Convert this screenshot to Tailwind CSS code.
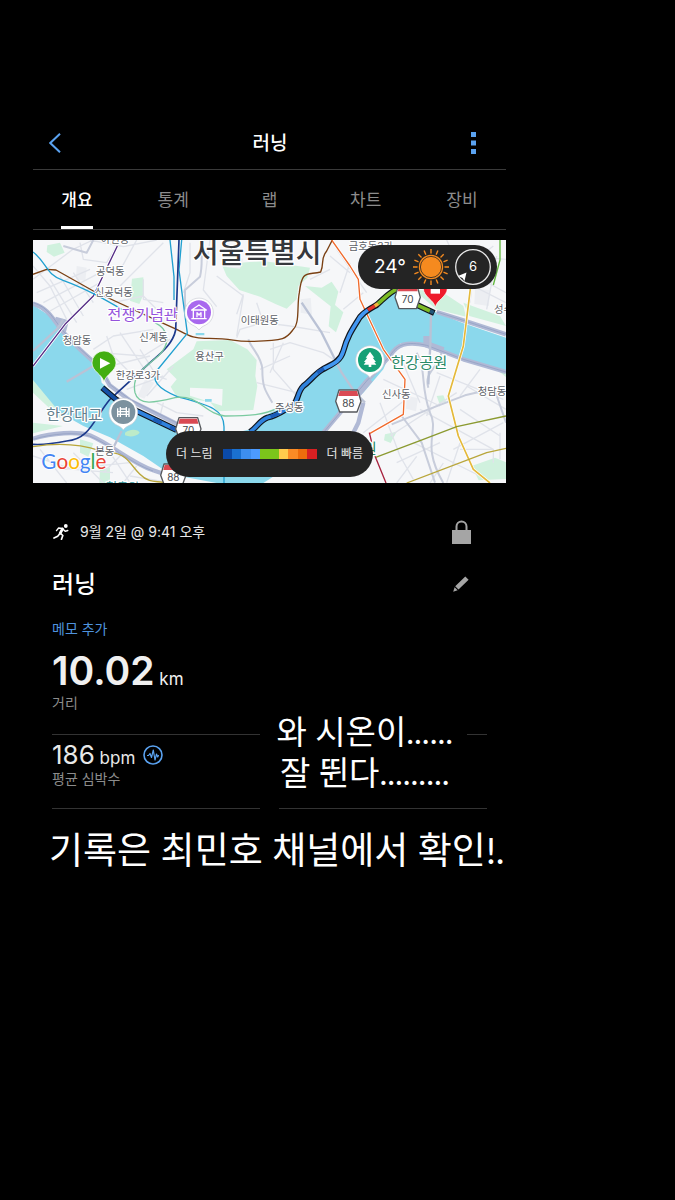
<!DOCTYPE html>
<html lang="ko">
<head>
    <meta charset="UTF-8">
    <meta name="viewport" content="width=device-width, initial-scale=1.0">
    <title>러닝</title>
    <script src="https://cdn.jsdelivr.net/npm/@tailwindcss/browser@4"></script>
    <style>
        body { font-family: Inter, 'Noto Sans CJK KR', sans-serif; }
        .caption { font-family: Lato, 'Noto Sans CJK KR', sans-serif; }
        .halo text { paint-order: stroke; stroke: #fff; stroke-width: 7px; stroke-linejoin: round; }
    </style>
</head>
<body class="bg-black text-white min-h-screen">
    <main class="ml-[33px] mr-[169px] pt-[116px]">
        <header class="flex items-center justify-between h-[54px] px-4 border-b border-[#3a3a3a]">
            <button type="button" aria-label="뒤로" class="text-[#5aa2f0]">
                <svg class="w-3 h-5" viewBox="0 0 12 20" fill="none" stroke="currentColor" stroke-width="2"><path d="M11 .8 1.3 10 11 19.2"/></svg>
            </button>
            <h1 class="text-[19px] font-medium pl-[22px] pt-1">러닝</h1>
            <button type="button" aria-label="더 보기" class="text-[#5aa2f0] px-3.5">
                <svg class="w-[5px] h-[22px]" viewBox="0 0 5 22" fill="currentColor"><path d="M0 0h5v5H0zM0 8.5h5v5H0zM0 17h5v5H0z"/></svg>
            </button>
        </header>

        <nav class="flex justify-between h-[60px] px-7 border-b border-[#3a3a3a] text-[17px] text-[#8c8c8c]">
            <button type="button" class="w-8 pt-1.5 text-white font-medium border-b-3 border-white whitespace-nowrap">개요</button>
            <button type="button" class="w-8 pt-1.5 border-b-3 border-transparent whitespace-nowrap">통계</button>
            <button type="button" class="w-8 pt-1.5 border-b-3 border-transparent whitespace-nowrap">랩</button>
            <button type="button" class="w-8 pt-1.5 border-b-3 border-transparent whitespace-nowrap">차트</button>
            <button type="button" class="w-8 pt-1.5 border-b-3 border-transparent whitespace-nowrap">장비</button>
        </nav>

        <!-- Route map -->
        <section class="relative mt-[10px]">
            <svg class="block w-full" viewBox="9 12 1419 729" fill="none" stroke-linejoin="round">
                <path fill="#f6f7f9" d="M9 12h1419v729H9z"/>
                <!-- parks -->
                <g fill="#d0f1de">
                    <path d="M575 85 700 75 840 95 832 125 805 150 800 190 770 218 738 205 690 182 628 162 590 120z"/>
                    <path d="M500 316 600 312 652 340 680 372 676 420 682 450 670 522 562 526 540 497 440 482 422 452 440 430 410 400 450 370 490 340z"/>
                    <path d="m825 150 50 5 30-18 20 30-10 40 25 22-22 60-22-18 6-60-40-32z"/>
                    <path d="m306 128 34-4 2 48-14 32-28-10zM52 28l38-8 14 30-32 12-22-14z"/>
                    <path d="m9 432 40 25 62 80-22 8L9 470zM250 560l70 18 8 14-40 8-48-20z"/>
                    <path d="m1150 160 90 10 60 40 8 32-90-22zM1300 200l110 40 18 30-110-30z"/>
                    <path d="m860 560 50-20 30-38-50 90-50 20zM1065 595l35-8-18 34-20-8zM1325 690l70-25 33 14v50l-82 4zM1220 480l20-2 8 20-20 4zM1405 405l23-6v24z"/>
                    <path d="m150 610 40 12-15 40-25-12zM9 560l90 10-90 22zM1215 40l70-12 12 40-40 30-40-20z"/>
                    <path d="M210 695h30v46h-32z"/>
                </g>
                <g fill="#eceef2">
                    <path d="m140 90 30 5-4 40-28-6zM580 60l60 8-10 30-40-4zM812 190l30-4 4 50-34-6zM1130 480l34 6-6 40-30-8zM1335 160l44 2-2 48-44-6zM345 430l28 10-30 48-20-8z"/>
                </g>
                <path fill="#f6f7f9" d="m480 455 98 4-2 50-96-30zM520 340l30 2-4 40-26-6z"/>
                <path fill="#8bd8ec" d="M525 489h20v8h-20zM497 291h26v7h-26z"/>
                <!-- side streets -->
                <g stroke="#e0e3ea" stroke-width="4">
                    <path d="M9 90 60 150 110 250M20 170l160-70M40 200l170-90M60 225l150-85M60 130l80 130M90 120l70 120M130 110l60 90M9 130l120-90 60-28M150 20l10 50 70 10 30-50M340 130v60l60 10M250 200l90-20 60 60M270 150l130-130M320 12l-60 110M180 12l100 20 100-20"/>
                    <path d="M210 350l130 10 80-50M190 340l60-40 120-20M230 300l20 60 60 60M270 290l80 120 60 20M240 390l120-30M330 340l50 80M290 460l110-40M350 480l80-90M380 500l60 30 80 10M400 500l-10 40"/>
                    <path d="M480 20v90l-20 60M540 12l-20 150 40 50M560 120l80 60-20 120M640 175l-20 60M680 200l20 60 80 10M700 260l-70 20-10 25M720 340l60-20 100 30 30 20M760 320l-40 90M780 270l120 20M840 130l60-30M900 60l60 50M690 400l90-40M680 440l120 30M730 320v80l70 80M920 40l90 130M940 220l60-50M960 80l-30 90"/>
                    <path d="M1040 60l180 90M1300 100l128 70M1240 150l150-120M1310 140l118 60M1330 110l-10 90M1400 60l-30 160M1250 12l50 110M1310 60l118 10"/>
                    <path d="M1060 430l170 80M1080 600l200-130M1110 360l60 140M1050 500l60 160 40 70M1230 420l-40 120M1000 590l140-110M1150 620l200 100M1170 520l220 120M1290 520l120 80M1270 640l150-80M1100 680l130-60M1220 410l200 80M1350 400l-60 80M1100 741l60-80M1290 620l-40 120M1410 590v80M1200 741l40-60M1310 450l118 70M1290 640h100v40"/>
                    <path d="M9 660l120 40 120 10M130 650l90 91M100 700l200-20M240 650l60 90M280 650l-60 60M320 690l-40 50M30 640l80 101M300 720l120 20"/>
                </g>
                <g stroke="#c8cddb" stroke-width="6">
                    <path d="M520 12c-10 50 0 70-10 110l-45 40v70M655 310c10 30 40 50 42 90 0 50 6 60 30 100M1160 350c30 50 10 100 40 180 30 60-30 90 40 211M1195 455c-15-50 35-60 40-110M1085 565l110-45 110-42 120-28M1115 540l60 80 40 120M1390 450l38 110M190 12 170 50 100 30"/>
                </g>

                <!-- Han river -->
                <path fill="#8bd8ec" d="M9 207 60 240 100 290 150 345 205 385 215 440 280 500 350 540 440 590 520 602 600 595 660 580 720 530 790 505 815 460 865 410 920 375 950 310 1000 235 1030 215 1095 165 1220 230 1300 262 1428 305V412L1300 375 1195 328 1112 322 1080 355 1060 400 1000 470 910 545 860 610 780 690 700 741H560L420 715 340 660 240 604 160 570 90 530 9 432z"/>
                <path fill="#bdebc9" d="M285 590c20-14 40-8 44 0-10 12-30 14-44 8z"/>
                <!-- riverside expressways -->
                <g stroke="#b0b9d5" stroke-width="13">
                    <path d="M9 203c50 15 60 50 95 90s60 62 105 100l30 55 60 45 100 50 90 45 100 18 70-8M9 608c60-18 130-22 170-10 70 30 120 80 190 105l60 20M880 590l80-95 50-60 70-75c20-35 50-45 110-32l110 42 128 38M1220 228l80 25 128 42M1000 500l-15 60-15 30"/>
                    <path stroke-width="20" d="m75 252 30 8-8 30M1020 430l-50 60M1190 300v25l50 18"/>
                </g>
                <g stroke="#8e9bbf" stroke-width="2">
                    <path d="M9 200c50 15 60 50 95 90s60 62 105 100l30 55 60 45 100 50 90 45M9 610c60-18 130-22 170-10 70 30 120 80 190 105M880 590l80-95 50-60 70-75c20-35 50-45 110-32l110 42 128 38M1220 228l80 25 128 42"/>
                </g>
                <!-- bridges and arterial roads -->
                <g stroke="#bac2d5" stroke-width="7">
                    <path d="M9 345 80 280 100 250M110 437l85-50M275 585l-25 50M815 200l60 90 60 120 40 60 30 30M1203 235l-2 90-6 120"/>
                </g>

                <!-- subway lines -->
                <g stroke="#fff" stroke-width="9">
                    <path d="M905 12 960 90 985 130 990 190 1060 340 1125 430 1120 535 1020 592M1322 150 1300 330 1255 480 1285 600 1330 700 1380 741M262 30 190 180 105 265 9 390"/>
                </g>
                <g stroke-width="4">
                    <path stroke="#7a4013" d="M9 115 50 100 78 102 190 165 400 262 440 280C480 300 490 308 530 307 620 306 600 318 670 316 770 314 770 306 790 280 810 260 800 210 808 170 816 100 830 118 872 108 884 80 870 70 890 45L907 12"/>
                    <path stroke="#552d86" d="M262 30 190 180 105 265 9 390"/>
                    <path stroke="#20a0d0" d="M9 48c40 30 40 70 90 85 70 25 130 60 190 95M420 12l12 110v70M455 12l-8 90 25 190-90 110c-20 30 0 55 60 80 90 25 140 35 140 90v170"/>
                    <path stroke="#1c3a8c" stroke-width="5" d="M447 12l-10 270c-10 50-60 80-90 110L240 490c-50 60-60 120-130 125-50 10-70 12-101 10"/>
                    <path stroke="#7bcaa0" d="M375 260c40 20 50 60 10 100-50 40-80 60-70 110 10 40 60 30 120 15 70-12 90 50 150 55 70 0 120-2 160-25"/>
                    <path stroke="#f06a2c" d="M905 12 960 90 985 130 990 190 1060 340 1125 430 1120 535 1020 592"/>
                    <path stroke="#e4b93a" stroke-width="5" d="M1322 150 1300 330 1255 480 1285 600 1330 700 1380 741"/>
                    <path stroke="#8b9a30" d="M1035 665 1180 610 1280 572 1428 540"/>
                    <path stroke="#b9a63a" d="M1130 741 1370 650 1428 637M9 632c60-10 130-12 200 12 90 8 80 30 120 70 30 30 50 20 70 25"/>
                    <path stroke="#a8233f" d="M1018 590 1035 660 1068 741"/>
                    <path stroke="#62b83e" d="M1410 12v60l-20 75"/>
                </g>

                <!-- recorded route -->
                <path stroke="#10151d" stroke-width="18" d="M217 455 260 492 320 525 440 582M660 588C680 575 688 554 712 545 745 538 765 520 790 507 806 490 802 468 820 450 840 436 850 418 875 402 900 386 930 380 940 345 952 300 970 275 990 243 1005 225 1020 218 1040 207 1060 190 1080 165 1110 155M1150 202 1213 231"/>
                <g stroke-width="11">
                    <path stroke="#1551a5" d="m218 456 42 36 60 33"/>
                    <path stroke="#2f82dd" d="m320 525 120 57M660 588C680 575 688 554 712 545 745 538 765 520 790 507 806 490 802 468 820 450 840 436 850 418 875 402"/>
                    <path stroke="#1b5db9" d="m370 550 25 11M420 573l20 9M722 542l28-11M862 410l22-14"/>
                    <path stroke="#4297f2" d="M882 398C905 385 930 380 940 345 952 300 970 275 990 243 998 233 1004 228 1014 222"/>
                    <path stroke="#e5322a" d="m1014 222 20-12"/>
                    <path stroke="#f3b43c" d="m1034 210 12-8"/>
                    <path stroke="#7dbb25" d="M1044 203C1062 188 1080 165 1110 155M1150 202l50 23"/>
                    <path stroke="#23567a" d="m1200 225 11 5"/>
                </g>

                <!-- place names -->
                <g class="halo" fill="#5c6066" font-size="31">
                    <text x="212" y="22">아현동</text>
                    <text x="198" y="118">공덕동</text>
                    <text x="194" y="179">신공덕동</text>
                    <text x="98" y="324">청암동</text>
                    <text x="328" y="315">신계동</text>
                    <text x="632" y="264">이태원동</text>
                    <text x="496" y="371">용산구</text>
                    <text x="257" y="428">한강로3가</text>
                    <text x="735" y="524">주성동</text>
                    <text x="1056" y="486">신사동</text>
                    <text x="1343" y="478">청담동</text>
                    <text x="1392" y="231">성수</text>
                    <text x="956" y="43">금호동3가</text>
                    <text x="196" y="657">본동</text>
                </g>
                <g class="halo" font-size="46">
                    <text x="232" y="251" fill="#9553dc">전쟁기념관</text>
                    <text x="1083" y="396" fill="#2a8a68">한강공원</text>
                    <text x="48" y="552" fill="#64808d">한강대교</text>
                    <text x="998" y="654" fill="#2a8a68">원</text>
                    <text x="228" y="768" font-size="36" fill="#2f8f94">현충원</text>
                </g>
                <g class="halo" font-weight="500"><text x="488" y="80" font-size="84" fill="#36383d">서울특별시</text></g>

                <!-- road shields -->
                <g font-size="30" text-anchor="middle">
                    <g transform="translate(1133 184)">
                        <path fill="#fff" stroke="#55585c" stroke-width="4" d="M-28-36h56l10 36-12 34h-52L-38 0z"/><path fill="#da4a53" d="M-26-33h52l4 15h-60z"/><text y="16" fill="#44474b">70</text>
                    </g>
                    <g transform="translate(955 495)">
                        <path fill="#fff" stroke="#55585c" stroke-width="4" d="M-28-33h56l10 34-12 32h-52L-38 1z"/><path fill="#da4a53" d="M-26-30h52l4 15h-60z"/><text y="17" fill="#44474b">88</text>
                    </g>
                    <g transform="translate(475 578)">
                        <path fill="#fff" stroke="#55585c" stroke-width="4" d="M-28-33h56l10 34-12 32h-52L-38 1z"/><path fill="#da4a53" d="M-26-30h52l4 15h-60z"/><text y="17" fill="#44474b">70</text>
                    </g>
                    <g transform="translate(430 717)">
                        <path fill="#fff" stroke="#55585c" stroke-width="4" d="M-28-33h56l10 34-12 32h-52L-38 1z"/><path fill="#da4a53" d="M-26-30h52l4 15h-60z"/><text y="17" fill="#44474b">88</text>
                    </g>
                </g>

                <!-- museum -->
                <path fill="#fff" stroke="#c9ccd3" stroke-width="2" d="M507 282c-8-12-18-12-28-20a43 43 0 1 1 56 0c-10 8-20 8-28 20z"/>
                <circle cx="507" cy="229" r="36" fill="#a868ee"/>
                <path stroke="#fff" stroke-width="4" d="M485 222h44l-22-15zM490 224v22M524 224v22M484 248h46M501 244v-14l6 7 6-7v14"/>
                <!-- riverside park -->
                <path fill="#fff" stroke="#c9ccd3" stroke-width="2" d="M1020 425c-8-12-18-12-28-20a43 43 0 1 1 56 0c-10 8-20 8-28 20z"/>
                <circle cx="1020" cy="372" r="36" fill="#16a077"/>
                <path fill="#fff" d="m1020 347 13 18h-5l10 13h-5l6 8h-15v7h-8v-7h-15l6-8h-5l10-13h-5z"/>
                <!-- bridge -->
                <path fill="#fff" stroke="#c9ccd3" stroke-width="2" d="M280 582c-8-12-18-12-28-20a43 43 0 1 1 56 0c-10 8-20 8-28 20z"/>
                <circle cx="280" cy="528" r="36" fill="#7c929f"/>
                <path stroke="#fff" stroke-width="4" d="M261 527h38M261 535h38M271 513v30M289 513v30M271 519h18M263 517v26M297 517v26"/>
                <!-- start / finish -->
                <path fill="#43ae12" stroke="#fff" stroke-width="2" d="M222 438c-4-22-36-32-36-57a36 36 0 0 1 72 0c0 25-32 35-36 57z"/>
                <path fill="#fff" d="m210 366 31 16-31 16z"/>
                <path fill="#ee1b2b" stroke="#fff" stroke-width="2" d="M1216 214c-4-22-36-32-36-57a36 36 0 0 1 72 0c0 25-32 35-36 57z"/>
                <path fill="#fff" d="M1202 145h28v28h-28z"/>

                <text x="34" y="698" font-size="62" font-family="Lato, sans-serif" stroke="#fff" stroke-width="5" paint-order="stroke"><tspan fill="#4285f4">G</tspan><tspan fill="#ea4335">o</tspan><tspan fill="#fbbc05">o</tspan><tspan fill="#4285f4">g</tspan><tspan fill="#34a853">l</tspan><tspan fill="#ea4335">e</tspan></text>
            </svg>

            <div class="absolute top-[5px] right-[9px] flex items-center justify-between w-[139px] h-[44px] pl-4 pr-1.5 rounded-full bg-[#242424]">
                <span class="text-[19px]">24°</span>
                <div class="flex items-center gap-1.5">
                    <svg class="size-9" viewBox="-18 -18 36 36">
                        <path stroke="#f58a1f" stroke-width="1.4" d="M0-18v36M-18 0h36M-12.7-12.7l25.4 25.4M-12.7 12.7l25.4-25.4M-6.9-16.6l13.8 33.2M6.9-16.6l-13.8 33.2M-16.6-6.9l33.2 13.8M-16.6 6.9l33.2-13.8"/>
                        <circle r="13.5" fill="#242424"/>
                        <circle r="12.2" fill="#f58a1f"/>
                        <circle r="10.6" fill="none" stroke="#242424" stroke-width=".8"/>
                    </svg>
                    <div class="relative flex items-center justify-center size-9 text-[13px]">
                        <svg class="absolute inset-0 size-9" viewBox="0 0 36 36" fill="none"><circle cx="18" cy="18" r="17.3" stroke="#e8e8e8" stroke-width="1.3"/><path fill="#fff" d="m3 27 8.500-3.500-2 8.500-2-3z"/></svg>
                        <span>6</span>
                    </div>
                </div>
            </div>

            <div class="absolute inset-x-0 bottom-1.5 flex justify-center">
                <div class="flex items-center gap-[10px] w-[207px] h-[46px] px-[10px] rounded-full bg-[#242424] text-xs text-[#e6e6e6] whitespace-nowrap">
                    <span>더 느림</span>
                    <div class="flex flex-1 h-[10px]">
                        <i class="flex-1 bg-[#0b4aa8]"></i><i class="flex-1 bg-[#1a70d0]"></i><i class="flex-1 bg-[#3d8eef]"></i><i class="flex-1 bg-[#4c9bff]"></i><i class="flex-1 bg-[#7cc51b]"></i><i class="flex-1 bg-[#7cc51b]"></i><i class="flex-1 bg-[#ffcb4d]"></i><i class="flex-1 bg-[#fa8b25]"></i><i class="flex-1 bg-[#ee6c0c]"></i><i class="flex-1 bg-[#d82022]"></i>
                    </div>
                    <span>더 빠름</span>
                </div>
            </div>
        </section>

        <section class="px-[19px] pt-9">
            <div class="flex items-center justify-between h-[26px] pr-4">
                <p class="flex items-center gap-2.5 text-sm text-[#e8e8e8]">
                    <svg class="w-[18px] h-4" viewBox="0 0 18 16" fill="none" stroke="#fff" stroke-linecap="round" stroke-linejoin="round"><circle cx="13.800" cy="2" r="1.900" fill="#fff" stroke="none"/><path stroke-width="2.800" d="M10.500 5 8.200 9.200"/><path stroke-width="1.400" d="M10.500 4.400 6.600 4 4.500 6.600M11.400 5.500l1.800 1.800 2.600-.8"/><path stroke-width="1.700" d="m8 9.500-2.300 2.700L2 14M8.800 9.500l2 2-1.300 3.800"/></svg>
                    <time>9월 2일 @ 9:41 오후</time>
                </p>
                <svg class="w-[19px] h-6" viewBox="0 0 19 24"><path fill="none" stroke="#a5a5a5" stroke-width="2" d="M4.500 11V6.500a5 5 0 0 1 10 0V11"/><path fill="#a5a5a5" d="M0 10h19v14H0z"/></svg>
            </div>
            <div class="flex items-center justify-between mt-5 h-[38px] pr-[18px]">
                <h2 class="text-2xl font-medium pt-0.5">러닝</h2>
                <button type="button" aria-label="이름 편집">
                    <svg class="w-4 h-4" viewBox="0 0 16 16" fill="#a5a5a5"><path d="M12.300.4 15.600 3.700 5.500 13.600 2.200 10.300zM1.600 11.200 4.700 14.300.2 15.800z"/></svg>
                </button>
            </div>
            <a href="#" class="block mt-3.5 text-sm leading-6 text-[#4f93dd]">메모 추가</a>

            <div class="relative">
                <dl class="grid grid-cols-2 gap-x-[19px]">
                    <div class="flex flex-col-reverse justify-end h-[94px] pt-3 border-b border-[#333]">
                        <dt class="text-sm leading-7 text-[#8c8c8c]">거리</dt>
                        <dd class="leading-4 text-[17px] text-[#f0f0f0]"><span class="text-[39px] leading-9 font-semibold">10.02</span> km</dd>
                    </div>
                    <div class="border-b border-[#333]"></div>
                    <div class="flex flex-col-reverse justify-end h-[74px] pt-1.5 border-b border-[#333]">
                        <dt class="text-sm leading-5 text-[#8c8c8c]">평균 심박수</dt>
                        <dd class="flex items-center">
                            <p class="leading-4 text-[17px] text-[#e8e8e8]"><span class="text-[26px] leading-7">186</span> bpm</p>
                            <svg class="size-5 ml-2" viewBox="0 0 20 20" fill="none" stroke="#5aa2f0"><circle cx="10" cy="10" r="9" stroke-width="1.600"/><path stroke-width="1.200" stroke-linejoin="round" d="M4 10.500h1.500L7 8.500l1.500 4L10.300 5l1.700 10 1.500-6 1.200 3 .8-1.500H16"/></svg>
                        </dd>
                    </div>
                    <div class="border-b border-[#333]"></div>
                </dl>
                <p class="caption absolute right-5 bottom-4 bg-black pl-1 pr-3.5 text-[33px] leading-[41px] text-center whitespace-nowrap">와 시온이......<br>잘 뛴다.........</p>
            </div>
        </section>

        <p class="caption mt-4 pl-4 text-[37px] leading-[50px] whitespace-nowrap">기록은 최민호 채널에서 확인!.</p>
    </main>
</body>
</html>
